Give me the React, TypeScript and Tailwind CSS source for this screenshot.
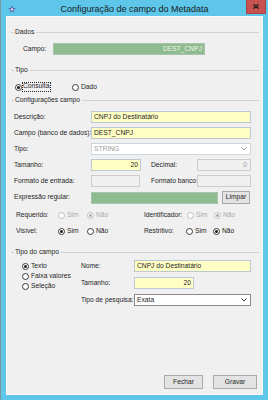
import React from "react";

type RadioProps = {
  label: string;
  checked?: boolean;
  disabled?: boolean;
  focus?: boolean;
  className?: string;
};

const Radio = ({ label, checked, disabled, focus, className = "" }: RadioProps) => (
  <div className={`flex items-center h-[10px] shrink-0 ${className}`}>
    <span
      className={`w-[7px] h-[7px] rounded-full border bg-white flex items-center justify-center shrink-0 ${
        disabled ? "border-[#bdbdbd]" : "border-[#3a3a3a]"
      }`}
    >
      {checked && (
        <span className={`w-[3px] h-[3px] rounded-full ${disabled ? "bg-[#a6a6a6]" : "bg-[#1a1a1a]"}`} />
      )}
    </span>
    <span
      className={`leading-none whitespace-nowrap ${disabled ? "text-[#a9a9a9]" : ""} ${
        focus ? "border border-dotted border-[#222] pr-[1px] pb-[1px]" : "ml-[2px]"
      }`}
    >
      {label}
    </span>
  </div>
);

const Header = ({ label, className = "" }: { label: string; className?: string }) => (
  <div className={`flex items-center h-[10px] ml-[4px] mr-[3px] ${className}`}>
    <div className="w-[3px] h-px bg-[#d2d2d2]" />
    <span className="pl-[1px] pr-[2px] leading-none whitespace-nowrap">{label}</span>
    <div className="flex-1 h-px bg-[#d2d2d2]" />
  </div>
);

const Label = ({ children, className = "" }: { children: React.ReactNode; className?: string }) => (
  <div className={`shrink-0 whitespace-nowrap leading-none ${className}`}>{children}</div>
);

const Chevron = ({ color }: { color: string }) => (
  <svg width="6" height="4" viewBox="0 0 6 4" className="shrink-0">
    <polyline points="0.5,0.5 3,3 5.5,0.5" fill="none" stroke={color} strokeWidth="1" />
  </svg>
);

export default function App() {
  return (
    <div className="w-[268px] h-[400px] bg-[#5dc6e9] flex flex-col border-l border-[#7b949e] font-['Liberation_Sans',Arial,sans-serif] text-[#1e1e1e]">
      {/* barra de título */}
      <div className="grid grid-cols-[1fr_auto_1fr] h-[16px] shrink-0">
        <div className="pl-[7px] pt-[5px]">
          <svg width="8" height="8" viewBox="0 0 8 8">
            <polygon points="4,0 5,3 8,3 5.5,5 6.5,8 4,6 1.5,8 2.5,5 0,3 3,3" fill="#6264a6" />
            <circle cx="4" cy="4.3" r="1.2" fill="#c8cce8" />
          </svg>
        </div>
        <div className="pt-[5px] text-[9px] leading-none text-[#1b1b1b] whitespace-nowrap">
          Configuração de campo do Metadata
        </div>
        <div className="flex justify-end pr-[2px]">
          <div className="w-[20px] h-[14px] bg-[#c75050] border border-[#a44545] border-t-0 flex items-center justify-center">
            <svg width="6" height="5" viewBox="0 0 6 5">
              <path d="M0.5 0.5 L5.5 4.5 M5.5 0.5 L0.5 4.5" stroke="#1c1c1c" strokeWidth="1.4" />
            </svg>
          </div>
        </div>
      </div>

      <div className="flex-1 flex px-[5px] pb-[5px]">
        <div className="flex-1 flex flex-col bg-[#f0f0f0] border border-[#f9f9f9] text-[6.7px]">
          <Header label="Dados" className="mt-[10px]" />
          <div className="mt-[6px] flex items-center h-[12px]">
            <Label className="w-[46px] pl-[16px]">Campo:</Label>
            <div className="w-[152px] h-[12px] bg-[#8fbc8f] border border-[#a8c4ae] flex items-center justify-end pr-[2px] text-[#eef5ee] leading-none">
              DEST_CNPJ
            </div>
          </div>

          <Header label="Tipo" className="mt-[10px]" />
          <div className="mt-[7px] flex pl-[8px]">
            <Radio label="Consulta" checked focus className="w-[57px]" />
            <Radio label="Dado" />
          </div>

          <Header label="Configurações campo" className="mt-[3px]" />
          <div className="mt-[6px] flex items-center h-[12px]">
            <Label className="w-[84px] pl-[7px]">Descrição:</Label>
            <div className="w-[160px] h-[12px] bg-[#ffffc4] border border-[#bcc8d4] flex items-center pl-[2px] leading-none">
              CNPJ do Destinatário
            </div>
          </div>
          <div className="mt-[4px] flex items-center h-[12px]">
            <Label className="w-[84px] pl-[7px]">Campo (banco de dados):</Label>
            <div className="w-[160px] h-[12px] bg-[#ffffc4] border border-[#bcc8d4] flex items-center pl-[2px] leading-none">
              DEST_CNPJ
            </div>
          </div>
          <div className="mt-[4px] flex items-center h-[12px]">
            <Label className="w-[84px] pl-[7px]">Tipo:</Label>
            <div className="w-[160px] h-[12px] bg-white border border-[#cfd5dc] flex items-center justify-between pl-[2px] pr-[3px] leading-none text-[#9a9a9a]">
              STRING
              <Chevron color="#9a9a9a" />
            </div>
          </div>
          <div className="mt-[4px] flex items-center h-[12px]">
            <Label className="w-[84px] pl-[7px]">Tamanho:</Label>
            <div className="w-[50px] h-[12px] bg-[#ffffc4] border border-[#bcc8d4] flex items-center justify-end pr-[2px] leading-none">
              20
            </div>
            <Label className="w-[56px] pl-[10px]">Decimal:</Label>
            <div className="w-[54px] h-[12px] bg-[#f0f0f0] border border-[#cccccc] flex items-center justify-end pr-[3px] leading-none text-[#a0a0a0]">
              0
            </div>
          </div>
          <div className="mt-[4px] flex items-center h-[12px]">
            <Label className="w-[84px] pl-[7px]">Formato de entrada:</Label>
            <div className="w-[49px] h-[12px] bg-[#f0f0f0] border border-[#cccccc]" />
            <Label className="w-[57px] pl-[11px]">Formato banco:</Label>
            <div className="w-[54px] h-[12px] bg-[#f0f0f0] border border-[#cccccc]" />
          </div>
          <div className="mt-[4px] flex items-center h-[13px]">
            <Label className="w-[84px] pl-[7px]">Expressão regular:</Label>
            <div className="w-[127px] h-[12px] bg-[#8fbc8f] border border-[#a8c4ae]" />
            <div className="ml-[4px] w-[28px] h-[13px] bg-[#e3e3e3] border border-[#a9a9a9] flex items-center justify-center leading-none">
              Limpar
            </div>
          </div>

          <div className="mt-[6px] flex h-[10px] items-center">
            <Label className="w-[51px] pl-[9px]">Requerido:</Label>
            <Radio label="Sim" disabled className="w-[29px]" />
            <Radio label="Não" checked disabled className="w-[57px]" />
            <Label className="w-[43px]">Identificador:</Label>
            <Radio label="Sim" disabled className="w-[27px]" />
            <Radio label="Não" checked disabled />
          </div>
          <div className="mt-[6px] flex h-[10px] items-center">
            <Label className="w-[51px] pl-[9px]">Visível:</Label>
            <Radio label="Sim" checked className="w-[29px]" />
            <Radio label="Não" className="w-[57px]" />
            <Label className="w-[42px]">Restritivo:</Label>
            <Radio label="Sim" className="w-[27px]" />
            <Radio label="Não" checked />
          </div>

          <Header label="Tipo do campo" className="mt-[11px]" />
          <div className="mt-[3px] flex">
            <div className="w-[74px] shrink-0 pl-[15px] pt-[1px] flex flex-col">
              <Radio label="Texto" checked />
              <Radio label="Faixa valores" />
              <Radio label="Seleção" />
            </div>
            <div className="flex flex-col gap-[5px]">
              <div className="flex items-center h-[12px]">
                <Label className="w-[53px]">Nome:</Label>
                <div className="w-[117px] h-[12px] bg-[#ffffc4] border border-[#bcc8d4] flex items-center pl-[2px] leading-none">
                  CNPJ do Destinatário
                </div>
              </div>
              <div className="flex items-center h-[12px]">
                <Label className="w-[53px]">Tamanho:</Label>
                <div className="w-[60px] h-[12px] bg-[#ffffc4] border border-[#bcc8d4] flex items-center justify-end pr-[2px] leading-none">
                  20
                </div>
              </div>
              <div className="flex items-center h-[12px]">
                <Label className="w-[53px]">Tipo de pesquisa:</Label>
                <div className="w-[117px] h-[12px] bg-white border border-[#8a8a8a] flex items-center justify-between pl-[2px] pr-[3px] leading-none">
                  Exata
                  <Chevron color="#333333" />
                </div>
              </div>
            </div>
          </div>

          <div className="mt-auto mb-[5px] mr-[5px] flex justify-end gap-[10px]">
            <div className="w-[39px] h-[14px] bg-[#e3e3e3] border border-[#a9a9a9] flex items-center justify-center leading-none">
              Fechar
            </div>
            <div className="w-[44px] h-[14px] bg-[#e3e3e3] border border-[#a9a9a9] flex items-center justify-center leading-none">
              Gravar
            </div>
          </div>
        </div>
      </div>
    </div>
  );
}
